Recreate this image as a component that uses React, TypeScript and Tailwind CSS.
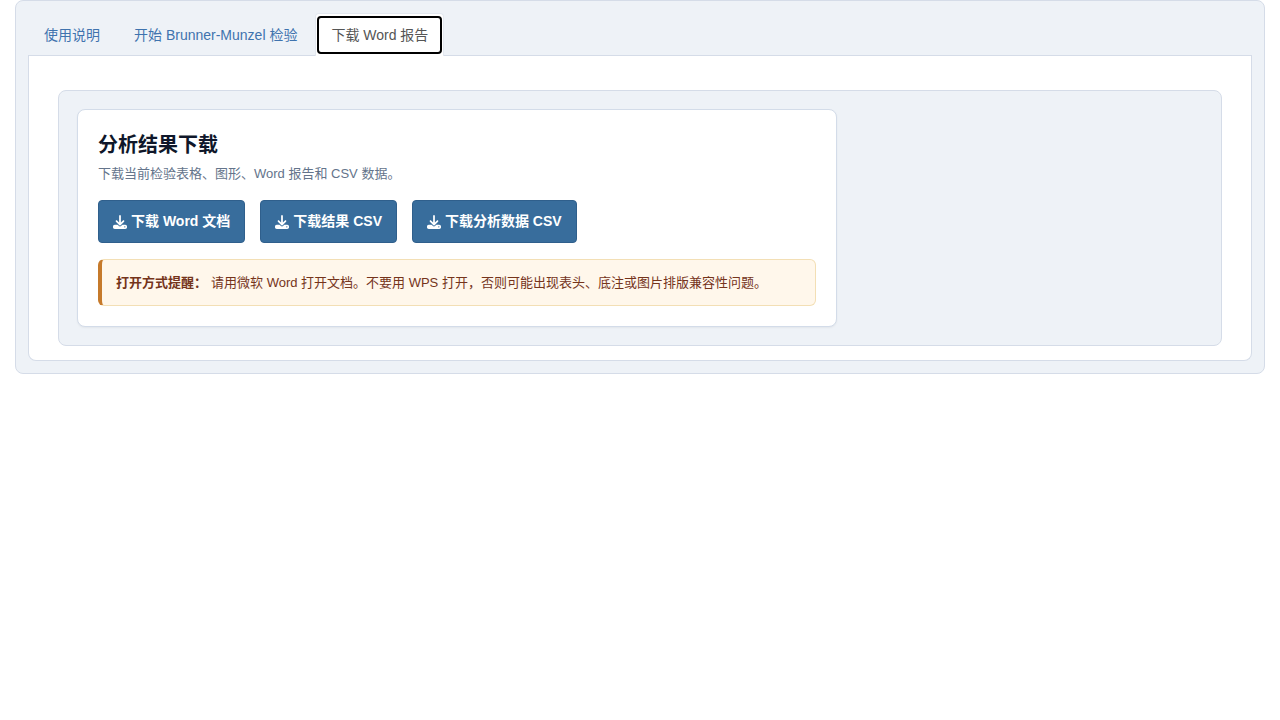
import { useState } from 'react';
import { FaDownload } from 'react-icons/fa6';

const tabs = ['使用说明', '开始 Brunner-Munzel 检验', '下载 Word 报告'];
const downloads = ['下载 Word 文档', '下载结果 CSV', '下载分析数据 CSV'];

export default function App() {
  const [active, setActive] = useState(2);

  return (
    <div className="px-[15px] font-['Liberation_Sans','Noto_Sans_CJK_SC',sans-serif] text-sm text-[#111827]">
      <main className="rounded-lg border border-[#d5dce8] bg-[#eef2f7] p-3">
        <div role="tablist" className="flex gap-0.5 border-b border-[#d5dce8]">
          {tabs.map((label, i) => (
            <button
              key={label}
              type="button"
              role="tab"
              aria-selected={active === i}
              onClick={() => setActive(i)}
              className={
                active === i
                  ? '-mb-px rounded-t border border-b-0 border-[#e3e8f0] bg-white px-px py-0.5 leading-[21px] text-[#555555] outline-none'
                  : '-mb-px rounded-t border border-transparent px-[15px] pt-[11px] pb-[9px] leading-[21px] text-[#3f73ae]'
              }
            >
              {active === i ? (
                <span className="block rounded border-2 border-black px-3 pt-[7px] pb-1.5">{label}</span>
              ) : (
                label
              )}
            </button>
          ))}
        </div>
        <div role="tabpanel" className="rounded-b-lg border border-t-0 border-[#d5dce8] bg-white px-[29px] pt-[34px] pb-3.5">
          <section className="rounded-lg border border-[#d5dce8] bg-[#eef2f7] p-[18px]">
            <div className="max-w-[760px] rounded-lg border border-[#d3dce9] bg-white p-5 shadow-xs">
              <h1 className="text-xl leading-[30px] font-bold text-[#0f172a]">分析结果下载</h1>
              <p className="mt-1 text-[13px] leading-5 text-[#64748b]">下载当前检验表格、图形、Word 报告和 CSV 数据。</p>
              <div className="mt-4 flex flex-wrap gap-[15px]">
                {downloads.map((label) => (
                  <button
                    key={label}
                    type="button"
                    className="flex items-center gap-1 rounded border border-[#2f5f8c] bg-[#386d9c] px-3.5 py-2.5 leading-[21px] font-bold text-white"
                  >
                    <FaDownload className="size-3.5" aria-hidden="true" />
                    {label}
                  </button>
                ))}
              </div>
              <div className="mt-4 rounded-md border border-l-4 border-[#f3dfb5] border-l-[#c67a2b] bg-[#fff7eb] px-3.5 py-3 text-[13px] leading-[21px] text-[#75341b]">
                <strong className="mr-1">打开方式提醒：</strong>
                <span>请用微软 Word 打开文档。不要用 WPS 打开，否则可能出现表头、底注或图片排版兼容性问题。</span>
              </div>
            </div>
          </section>
        </div>
      </main>
    </div>
  );
}
